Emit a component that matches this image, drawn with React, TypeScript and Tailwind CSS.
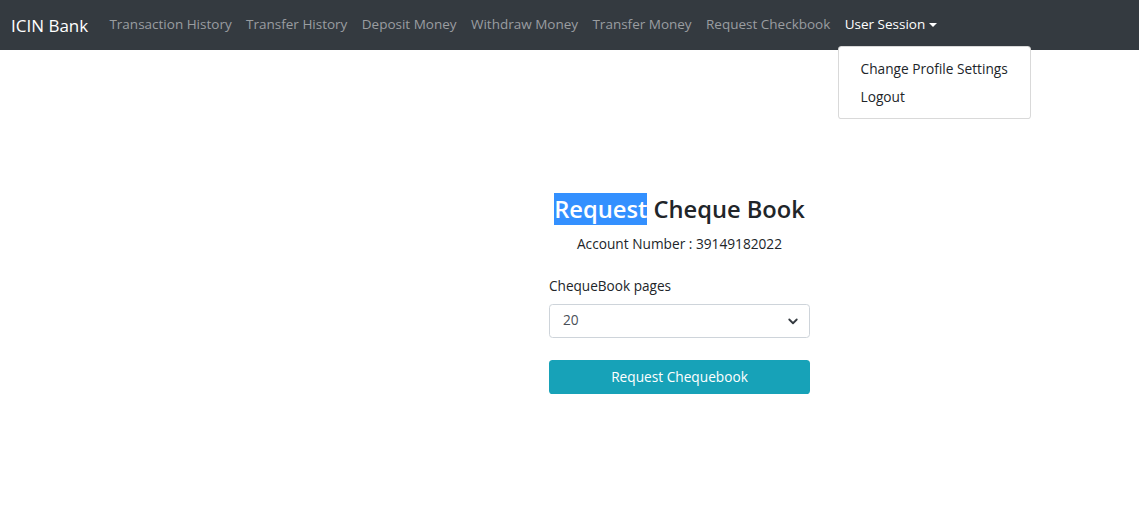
import React from "react";

const links = [
  "Transaction History",
  "Transfer History",
  "Deposit Money",
  "Withdraw Money",
  "Transfer Money",
  "Request Checkbook",
];

export default function App() {
  return (
    <div className="min-h-[514px] bg-white [font-family:'Open_Sans',sans-serif] text-[#212529]">
      <nav className="relative flex items-center h-[50px] bg-[#343a40] pl-[11px]">
        <span className="text-white text-[17px] leading-[27px] mr-[14px]">ICIN Bank</span>
        <ul className="flex items-center">
          {links.map((l) => (
            <li key={l}>
              <a className="block px-[7.2px] text-[13.5px] leading-[21.6px] text-[#9a9da0] whitespace-nowrap">
                {l}
              </a>
            </li>
          ))}
          <li className="relative">
            <a className="flex items-center px-[7.2px] text-[13.5px] leading-[21.6px] text-white whitespace-nowrap">
              User Session
              <span className="ml-[4px] w-0 h-0 border-l-[4.3px] border-r-[4.3px] border-t-[4.3px] border-l-transparent border-r-transparent border-t-white" />
            </a>
            <div className="absolute left-0 top-[32px] z-10 w-[193px] py-[7.2px] bg-white border border-[rgba(0,0,0,0.15)] rounded-[3.6px]">
              <div className="px-[22px] py-[3.6px] text-[13.7px] leading-[21px] text-[#212529] whitespace-nowrap">
                Change Profile Settings
              </div>
              <div className="px-[22px] py-[3.6px] text-[13.7px] leading-[21px] text-[#212529]">
                Logout
              </div>
            </div>
          </li>
        </ul>
      </nav>

      <main className="flex pt-[142px]">
        <div className="ml-[549px] w-[261px] flex flex-col">
          <h2 className="text-center text-[23.7px] leading-[34.5px] font-semibold whitespace-nowrap">
            <span className="bg-[#3390ff] text-white">Request</span> Cheque Book
          </h2>
          <p className="mt-[6px] text-center text-[13.7px] leading-[21.6px]">
            Account Number : 39149182022
          </p>
          <label className="mt-[21px] text-[13.6px] leading-[21.6px]">ChequeBook pages</label>
          <div className="mt-[7px] h-[34px] flex items-center justify-between border border-[#ced4da] rounded-[3.6px] pl-[13px] pr-[10px] text-[13.7px] text-[#495057]">
            <span>20</span>
            <svg width="12" height="12" viewBox="0 0 16 16" fill="none" stroke="#343a40" strokeWidth="2.4" strokeLinecap="round" strokeLinejoin="round">
              <path d="M3 6l5 5 5-5" />
            </svg>
          </div>
          <button className="mt-[22px] h-[34px] rounded-[3.6px] bg-[#17a2b8] text-white text-[13.7px] leading-[21.6px]">
            Request Chequebook
          </button>
        </div>
      </main>
    </div>
  );
}
